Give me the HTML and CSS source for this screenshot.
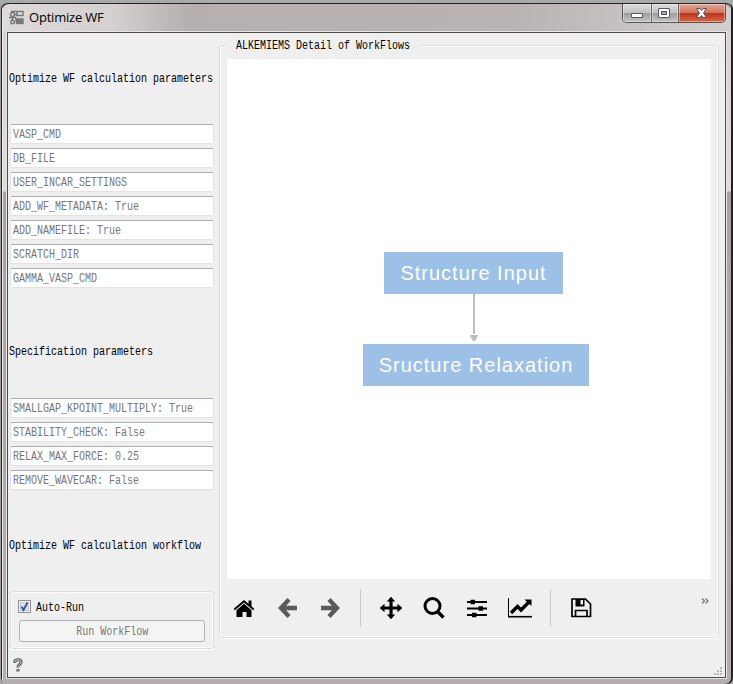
FILE: index.html
```html
<!DOCTYPE html>
<html lang="en">
<head>
<meta charset="utf-8">
<title>Optimize WF</title>
<link rel="stylesheet" href="styles.css">
</head>
<body>
<div class="window">
  <header class="titlebar">
    <svg class="app-icon" width="15" height="15" viewBox="0 0 15 15" fill="none" stroke="#777" stroke-width="1.4"><circle cx="3.500" cy="4.500" r="2"/><circle cx="3.500" cy="12" r="1.800"/><path d="M3.500 6.500v4M0 7.500h7M7 7.500v3h2M5.500 4.500H8M2 1.500h6"/><rect x="8" y="1.500" width="6" height="4"/><rect x="7.500" y="9" width="6.500" height="4.500" fill="#777"/></svg>
    <h1 class="title">Optimize WF</h1>
    <div class="controls">
      <span class="ctl"><svg width="28" height="18" viewBox="0 0 28 18"><rect x="8.500" y="9.500" width="11" height="4" rx=".5" fill="#fff" stroke="#555868"/></svg></span>
      <span class="ctl"><svg width="26" height="18" viewBox="0 0 26 18"><rect x="6.500" y="4.500" width="11" height="9" rx=".5" fill="#fff" stroke="#555868"/><rect x="9.500" y="7.500" width="5" height="3" fill="#aaa" stroke="#555868"/></svg></span>
      <span class="ctl close"><svg width="46" height="18" viewBox="0 0 46 18"><path d="M17.500 4.500h3.500l1.500 2 1.500-2h3.500l-3 4.500 3 4.500H24l-1.500-2-1.500 2h-3.500l3-4.500z" fill="#fff" stroke="#555868"/></svg></span>
    </div>
  </header>
  <main class="client">
    <section class="side">
      <h2 class="heading first"><span class="t">Optimize WF calculation parameters</span></h2>
      <div class="fields">
        <div class="field"><span class="t">VASP_CMD</span></div>
        <div class="field"><span class="t">DB_FILE</span></div>
        <div class="field"><span class="t">USER_INCAR_SETTINGS</span></div>
        <div class="field"><span class="t">ADD_WF_METADATA: True</span></div>
        <div class="field"><span class="t">ADD_NAMEFILE: True</span></div>
        <div class="field"><span class="t">SCRATCH_DIR</span></div>
        <div class="field"><span class="t">GAMMA_VASP_CMD</span></div>
      </div>
      <h2 class="heading second"><span class="t">Specification parameters</span></h2>
      <div class="fields">
        <div class="field"><span class="t">SMALLGAP_KPOINT_MULTIPLY: True</span></div>
        <div class="field"><span class="t">STABILITY_CHECK: False</span></div>
        <div class="field"><span class="t">RELAX_MAX_FORCE: 0.25</span></div>
        <div class="field"><span class="t">REMOVE_WAVECAR: False</span></div>
      </div>
      <h2 class="heading third"><span class="t">Optimize WF calculation workflow</span></h2>
      <div class="runbox">
        <label class="check"><svg width="13" height="13" viewBox="0 0 13 13"><rect x=".5" y=".5" width="12" height="12" fill="#f4f4f4" stroke="#8e8f8f"/><rect x="2.500" y="2.500" width="8" height="8" fill="#dfe3ea" stroke="#c3c8d0"/><path d="M3.500 6.500l2 3.500 4-7.500" fill="none" stroke="#3a539f" stroke-width="1.900"/></svg><span class="t">Auto-Run</span></label>
        <div class="run"><span class="t">Run WorkFlow</span></div>
      </div>
      <svg class="help" width="10" height="14" viewBox="0 0 10 14" fill="none"><path d="M1.800 5V4Q1.800 1.700 5 1.700T8.200 4Q8.200 5.500 6.500 6.500T5 9.500M5 11v2.500" stroke="#555" stroke-width="3"/><path d="M1.800 4.500V4Q1.800 1.700 5 1.700T8.200 4Q8.200 5.500 6.500 6.500T5 9M5 11.700v1" stroke="#ddd"/></svg>
    </section>
    <section class="detail">
      <h2 class="legend"><span class="t">ALKEMIEMS Detail of WorkFlows</span></h2>
      <div class="canvas">
        <div class="node input">Structure Input</div>
        <svg class="arrow" width="8" height="50" viewBox="0 0 8 50"><path d="M3 0h2v40H3zM0 41h8v1L5 47H3L0 42z" fill="#bfbfbf"/></svg>
        <div class="node relax">Sructure Relaxation</div>
      </div>
      <div class="toolbar">
        <svg class="home" width="22" height="24" viewBox="0 0 22 24"><path d="M11 7.200L18.500 14v6.500q0 .5-.5.500h-4.500v-5h-4v5H4q-.5 0-.5-.5V14z"/><path d="M1 14l10-8.500L21 14" fill="none" stroke="#efefef" stroke-width="3.200"/><path d="M1.300 13.500L11 5.300l9.700 8.200" fill="none" stroke="#000" stroke-width="1.900"/><path d="M15.500 4.500h3V11l-3-2.500z"/></svg>
        <svg class="back" width="20" height="24" viewBox="0 0 20 24"><path d="M11 3.500L3 12l8 8.500M3 12h16" fill="none" stroke="#5a5a5a" stroke-width="4.300"/></svg>
        <svg class="forward" width="20" height="24" viewBox="0 0 20 24"><path d="M9 3.500l8 8.500-8 8.500M17 12H1" fill="none" stroke="#5a5a5a" stroke-width="4.300"/></svg>
        <i class="sep s1"></i>
        <svg class="move" width="24" height="24" viewBox="0 0 24 24"><path d="M12 .7l4.200 4.800h-2.600v4.900h4.900V7.800l4.800 4.200-4.800 4.200v-2.600h-4.900v4.900h2.600L12 23.300l-4.200-4.800h2.600v-4.900H5.500v2.600L.7 12l4.800-4.200v2.600h4.900V5.500H7.800z"/></svg>
        <svg class="search" width="22" height="24" viewBox="0 0 22 24" fill="none" stroke="#000"><circle cx="9.500" cy="10" r="7.500" stroke-width="3"/><path d="M14.500 15.500l6 6" stroke-width="3.400"/></svg>
        <svg class="sliders" width="20" height="24" viewBox="0 0 20 24"><path d="M0 6h20M0 12.500h20M0 19h20" stroke="#000" stroke-width="1.800"/><path d="M3.500 3.700h4.500v4.600H3.500zM11.500 10.200H16v4.600h-4.500zM5 16.700h4.500v4.600H5z"/></svg>
        <svg class="chart" width="24" height="24" viewBox="0 0 24 24"><path d="M.5 2v19.200" stroke="#000"/><path d="M0 20.700h24" stroke="#000" stroke-width="1.600"/><path d="M3 17l6.500-6.500 3.500 3.500 8-8" fill="none" stroke="#000" stroke-width="3.400"/><path d="M16.500 3.500h7V10z"/></svg>
        <i class="sep s2"></i>
        <svg class="save" width="21" height="24" viewBox="0 0 21 24"><path d="M1 3h13.500l5 5v12.500H1zM4.500 20.500V14.500h11.500v6" fill="none" stroke="#000" stroke-width="1.700"/><path d="M4.500 3h9v7.500h-9z"/><path d="M9.500 4h2.500v4.500H9.500z" fill="#efefef"/></svg>
        <svg class="more" width="8" height="6" viewBox="0 0 8 6" fill="none" stroke="#777" stroke-width="1.300"><path d="M1 .5L3.500 3 1 5.500M4.500 .5L7 3 4.500 5.500"/></svg>
      </div>
    </section>
    <svg class="grip" width="9" height="9" viewBox="0 0 9 9" fill="#b8b8b8"><path d="M6 0h2v2H6zM6 3h2v2H6zM3 3h2v2H3zM6 6h2v2H6zM3 6h2v2H3zM0 6h2v2H0z"/></svg>
  </main>
</div>
</body>
</html>
```
FILE: styles.css
```css
* { box-sizing: border-box; }
body { margin: 0; background: #aaa; overflow: hidden; }
h1, h2 { margin: 0; font-weight: normal; }
svg { display: block; flex: none; }
.window {
  width: 733px; height: 684px;
  border: 1px solid #a0a0a0; border-top: 3px solid #a9a9a9; border-bottom: 0; border-right: 0;
  padding: 0 6px 0 5px;
  background: linear-gradient(#d6cfce 0, #e2dbda 188px, #aba3a3 189px, #b5adad 100%);
  box-shadow: inset 1px 1px #222, inset -2px 0 #222, inset 2px 2px #eee;
  border-radius: 8px 8px 6px 6px;
}
.titlebar {
  height: 29px; margin: 0 -3px; padding: 0 4px 0 6px;
  display: flex; align-items: flex-start;
  background: linear-gradient(90deg, #dedada 0, #d5d0d0 110px, #b5afaf 185px, #b9b3b3 70%, #d2cfcf 100%);
  border-top: 1px solid #222; border-radius: 6px 6px 0 0;
}
.app-icon { margin: 6px 5px 0 0; }
.title { font: 13px/20px "Open Sans", "Noto Sans", sans-serif; margin-top: 3px; flex: 1; letter-spacing: -.2px; }
.controls { display: flex; height: 19px; border: 1px solid #555; border-top: 0; border-radius: 0 0 5px 5px; overflow: hidden; }
.ctl { background: linear-gradient(#ddd 0, #c2c0c1 48%, #9c9a9c 50%, #c5c3c4); border-right: 1px solid #666; box-shadow: inset 0 0 0 1px #ffffff66; }
.ctl.close { background: linear-gradient(#e6a795 0, #d6715b 48%, #bd301b 50%, #d66a48); border: 0; }
.client { position: relative; width: 719px; height: 646px; margin-left: 1px; border: 1px solid #4f4b4b; outline: 1px solid #e9e5e5; background: #efefef; display: flex; }
.t { display: inline-block; font: 12px/16px "Liberation Mono", monospace; white-space: nowrap; transform: scaleX(.8333); transform-origin: 0 50%; }
.side { width: 211px; flex: none; padding-left: 2px; }
.heading { height: 16px; line-height: 0; }
.first { margin: 38px 0 37px -1px; }
.second { margin: 56px 0 38px -1px; }
.third { margin: 48px 0 37px -1px; }
.fields { display: grid; grid-template-columns: minmax(0, 1fr); gap: 4px; width: 204px; }
.field { height: 20px; border: 1px solid #e2e3ea; border-top-color: #abadb3; border-radius: 2px; background: #fff; color: #777; padding: 2px 2px 0; line-height: 0; }
.runbox { width: 204px; height: 58px; border: 1px solid #d5dfe5; border-radius: 3px; box-shadow: inset 0 0 0 1px #fff, 0 1px #fff; padding: 8px 8px 8px 7px; }
.check { display: flex; gap: 5px; height: 16px; line-height: 0; }
.run { width: 186px; height: 22px; margin: 4px 0 0 1px; border: 1px solid #adb2b5; border-radius: 3px; background: #f4f4f4; color: #777; text-align: center; line-height: 0; padding-top: 3px; }
.run .t { transform-origin: 50% 50%; }
.help { margin: 9px 0 0 3px; }
.detail { width: 500px; flex: none; height: 593px; margin-top: 12px; border: 1px solid #d5dfe5; border-radius: 3px; box-shadow: inset 0 0 0 1px #fff, 0 1px #fff; padding: 0 6px 0 7px; }
.legend { width: 193px; height: 16px; margin: -8px 0 5px; padding-left: 9px; line-height: 0; background: #efefef; overflow: hidden; }
.canvas { width: 484px; height: 520px; background: #fff; display: flex; flex-direction: column; align-items: center; padding: 193px 0 0 9px; }
.node { height: 42px; background: #9dc0e7; color: #fff; font: 20px/42px "Liberation Sans", sans-serif; letter-spacing: 1px; text-align: center; white-space: nowrap; }
.input { width: 179px; }
.relax { width: 226px; margin-left: 5px; }
.toolbar { height: 57px; display: flex; align-items: center; }
.home { margin-left: 6px; }
.back { margin-left: 23px; }
.forward { margin-left: 22px; }
.sep { width: 1px; height: 38px; background: #c8c8c8; }
.s1 { margin-left: 20px; }
.move { margin-left: 18px; }
.search { margin-left: 20px; }
.sliders { margin-left: 22px; }
.chart { margin-left: 21px; }
.s2 { margin-left: 18px; }
.save { margin-left: 20px; }
.more { margin: -14px 0 0 109px; }
.grip { position: absolute; right: 2px; bottom: 1px; }
```
